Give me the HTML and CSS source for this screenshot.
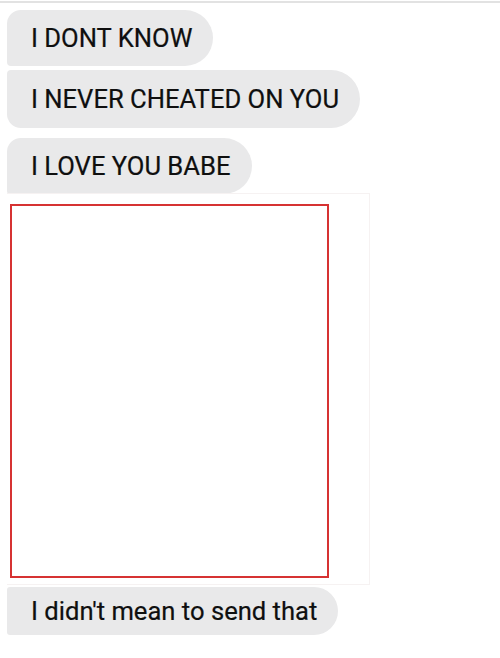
FILE: index.html
```html
<!DOCTYPE html>
<html lang="en">
<head>
    <meta charset="UTF-8">
    <meta name="viewport" content="width=device-width, initial-scale=1.0">
    <title>Messages</title>
    <link rel="stylesheet" href="styles.css">
</head>
<body>
    <div class="top-line"></div>

    <div class="thread">
        <div class="bubble first">I DONT KNOW</div>
        <div class="bubble middle">I NEVER CHEATED ON YOU</div>
        <div class="bubble last">I LOVE YOU BABE</div>

        <div class="attachment">
            <div class="frame"></div>
        </div>

        <div class="bubble final">I didn't mean to send that</div>
    </div>
</body>
</html>
```

FILE: styles.css
```css
body {
    font-family: Roboto, "Liberation Sans", Arial, sans-serif;
    margin: 0;
    background-color: #fff;
    color: #0f0f0f;
    height: 658px;
    overflow: hidden;
}

.top-line {
    margin-top: 1px;
    height: 2px;
    background-color: #e2e2e2;
}

.thread {
    display: flex;
    flex-direction: column;
    align-items: flex-start;
    padding: 7px 0 0 7px;
}

.bubble {
    background-color: #e9e9ea;
    font-size: 25.6px;
    line-height: 30px;
    padding: 13px 21px 13px 24px;
    border-radius: 28px;
    white-space: nowrap;
    -webkit-text-stroke: 0.2px #0f0f0f;
}

.bubble.first {
    border-radius: 14px 28px 28px 4px;
}

.bubble.middle {
    margin-top: 4px;
    padding-top: 14px;
    padding-bottom: 14px;
    border-radius: 4px 29px 29px 14px;
}

.bubble.last {
    margin-top: 10px;
    border-radius: 14px 28px 28px 3px;
}

.attachment {
    margin-top: -1px;
    width: 363px;
    height: 392px;
    border: 1px solid #f6f2f2;
    border-left: none;
    box-sizing: border-box;
    padding: 10px 0 0 3px;
}

.frame {
    width: 319px;
    height: 374px;
    border: 2px solid #d63232;
    box-sizing: border-box;
}

.bubble.final {
    margin-top: 2px;
    padding-top: 9px;
    padding-bottom: 9px;
    border-radius: 3px 24px 24px 3px;
}
```
